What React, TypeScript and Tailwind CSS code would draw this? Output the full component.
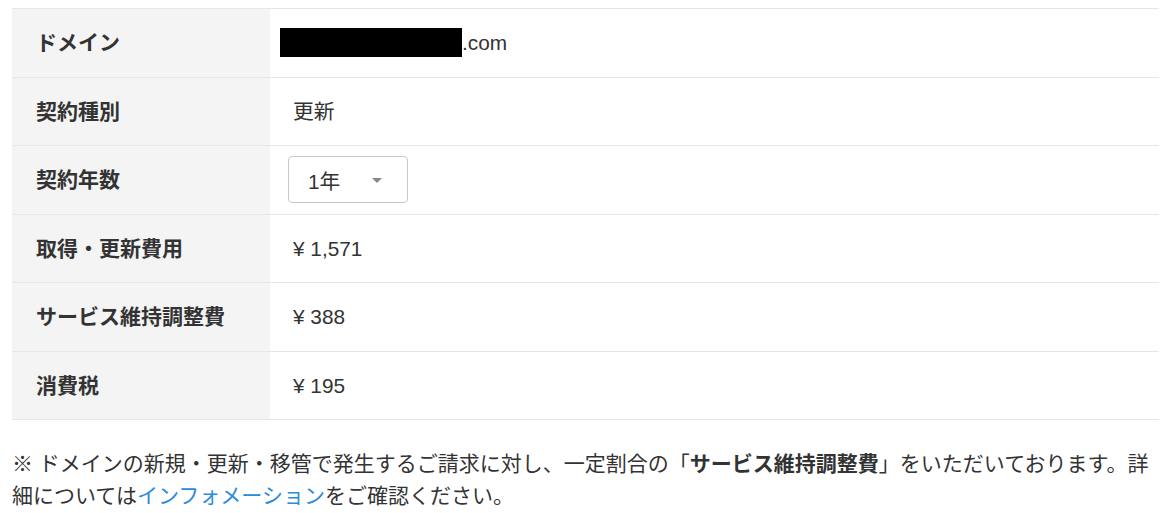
import React from "react";

const font = { fontFamily: '"Liberation Sans", "Noto Sans CJK JP", sans-serif' };

function Row({ label, children }: { label: string; children: React.ReactNode }) {
  return (
    <div className="flex h-[68.5px] border-t border-[#e6e6e6]">
      <div className="w-[258px] shrink-0 bg-[#f4f4f4] pl-[24px] flex items-center font-bold text-[#333] text-[21px]">
        {label}
      </div>
      <div className="flex-1 pl-[23px] flex items-center text-[#333]">{children}</div>
    </div>
  );
}

export default function App() {
  return (
    <div
      className="bg-white w-[1171px] h-[513px] overflow-hidden pt-[8px] px-[12px] text-[20.8px] leading-[1.5] text-[#333]"
      style={font}
    >
      <div className="border-b border-[#e6e6e6]">
        <Row label="ドメイン">
          <span className="flex items-center">
            <span className="inline-block w-[182px] h-[29px] bg-black ml-[-13px]" />
            <span>.com</span>
          </span>
        </Row>
        <Row label="契約種別">更新</Row>
        <Row label="契約年数">
          <div className="ml-[-5px] w-[120px] h-[47px] border border-[#c8c8c8] rounded-[4px] flex items-center pl-[19px] pt-[3px] relative">
            <span>1年</span>
            <span className="absolute left-[83px] top-[21px] w-0 h-0 border-l-[5px] border-r-[5px] border-t-[5px] border-l-transparent border-r-transparent border-t-[#888]" />
          </div>
        </Row>
        <Row label="取得・更新費用">¥ 1,571</Row>
        <Row label="サービス維持調整費">¥ 388</Row>
        <Row label="消費税">¥ 195</Row>
      </div>
      <div className="mt-[28px] leading-[31.5px] text-[21px]">
        <div className="whitespace-nowrap">
          ※ ドメインの新規・更新・移管で発生するご請求に対し、一定割合の「<b>サービス維持調整費</b>」をいただいております。詳
        </div>
        <div>
          細については<span className="text-[#2d8bd8]">インフォメーション</span>をご確認ください。
        </div>
      </div>
    </div>
  );
}
